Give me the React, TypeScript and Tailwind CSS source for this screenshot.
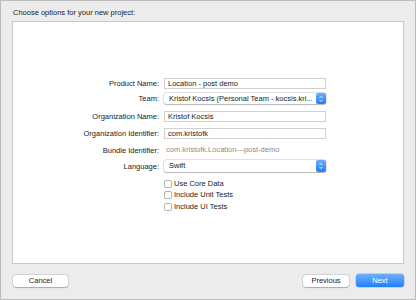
import React from 'react';

const font = { fontFamily: '"Liberation Sans", Arial, sans-serif' };

const Label: React.FC<{ children: React.ReactNode }> = ({ children }) => (
  <div className="w-[151px] pr-[5px] text-right text-[7.5px] leading-[11px] text-[#222]">{children}</div>
);

const Field: React.FC<{ value: string }> = ({ value }) => (
  <div className="w-[162px] h-[11px] border border-[#cfcfcf] bg-white px-[3px] text-[7.5px] leading-[9px] text-[#222]">
    {value}
  </div>
);

const Stepper = () => (
  <div className="w-[10px] h-full rounded-[2px] bg-gradient-to-b from-[#6aaefa] to-[#1d7ff8] flex items-center justify-center">
    <svg width="6" height="8" viewBox="0 0 6 8" fill="none" stroke="white" strokeWidth="0.9">
      <path d="M1.5 3 L3 1.5 L4.5 3" />
      <path d="M1.5 5 L3 6.5 L4.5 5" />
    </svg>
  </div>
);

const Popup: React.FC<{ value: string; h: string }> = ({ value, h }) => (
  <div className={`w-[162px] ${h} rounded-[2px] bg-white shadow-[0_0_0_0.5px_rgba(0,0,0,0.2),0_0.5px_1px_rgba(0,0,0,0.2)] flex items-center`}>
    <div className="flex-1 pl-[5px] text-[7.5px] leading-[10px] text-[#222] whitespace-nowrap overflow-hidden">{value}</div>
    <Stepper />
  </div>
);

const Check: React.FC<{ label: string }> = ({ label }) => (
  <div className="flex items-center h-[11.5px] pl-[151px]">
    <div className="w-[8px] h-[8px] rounded-[2px] border border-[#b5b5b5] bg-white" />
    <span className="ml-[2px] text-[7.5px] leading-[10px] text-[#222]">{label}</span>
  </div>
);

export default function App() {
  return (
    <div style={font} className="w-[416px] h-[300px] bg-[#ececec] border border-[#bcbcbc] flex flex-col px-[11px]">
      <div className="pt-[7px] h-[20px] pl-[1px] text-[7.5px] leading-[10px] text-[#222]">
        Choose options for your new project:
      </div>
      <div className="h-[243px] bg-white border border-[#c9c9c9] flex flex-col pt-[56px]">
        <div className="flex items-center">
          <Label>Product Name:</Label>
          <Field value="Location - post demo" />
        </div>
        <div className="flex items-center mt-[4px]">
          <Label>Team:</Label>
          <Popup h="h-[11px]" value="Kristof Kocsis (Personal Team - kocsis.kri..." />
        </div>
        <div className="flex items-center mt-[7px]">
          <Label>Organization Name:</Label>
          <Field value="Kristof Kocsis" />
        </div>
        <div className="flex items-center mt-[6px]">
          <Label>Organization Identifier:</Label>
          <Field value="com.kristofk" />
        </div>
        <div className="flex items-center mt-[6px] h-[10px]">
          <Label>Bundle Identifier:</Label>
          <div className="pl-[2px] text-[7.5px] leading-[10px] text-[#8c8c8c]">com.kristofk.Location---post-demo</div>
        </div>
        <div className="flex items-center mt-[5px]">
          <Label>Language:</Label>
          <Popup h="h-[12px]" value="Swift" />
        </div>
        <div className="mt-[6px] flex flex-col">
          <Check label="Use Core Data" />
          <Check label="Include Unit Tests" />
          <Check label="Include UI Tests" />
        </div>
      </div>
      <div className="flex items-center justify-between mt-[10px] pl-[1px]">
        <button className="w-[55px] h-[12px] rounded-[3px] bg-white shadow-[0_0_0_0.5px_rgba(0,0,0,0.18),0_0.5px_1px_rgba(0,0,0,0.2)] text-[7.5px] leading-[10px] text-[#222]">
          Cancel
        </button>
        <div className="flex items-center">
          <button className="w-[46px] h-[12px] rounded-[3px] bg-white shadow-[0_0_0_0.5px_rgba(0,0,0,0.18),0_0.5px_1px_rgba(0,0,0,0.2)] text-[7.5px] leading-[10px] text-[#222]">
            Previous
          </button>
          <button className="ml-[7px] w-[48px] h-[13px] rounded-[3px] bg-gradient-to-b from-[#6cb0fb] to-[#1c7ff9] shadow-[0_0_0_0.5px_rgba(0,60,160,0.3)] text-[7.5px] leading-[10px] text-white">
            Next
          </button>
        </div>
      </div>
    </div>
  );
}
